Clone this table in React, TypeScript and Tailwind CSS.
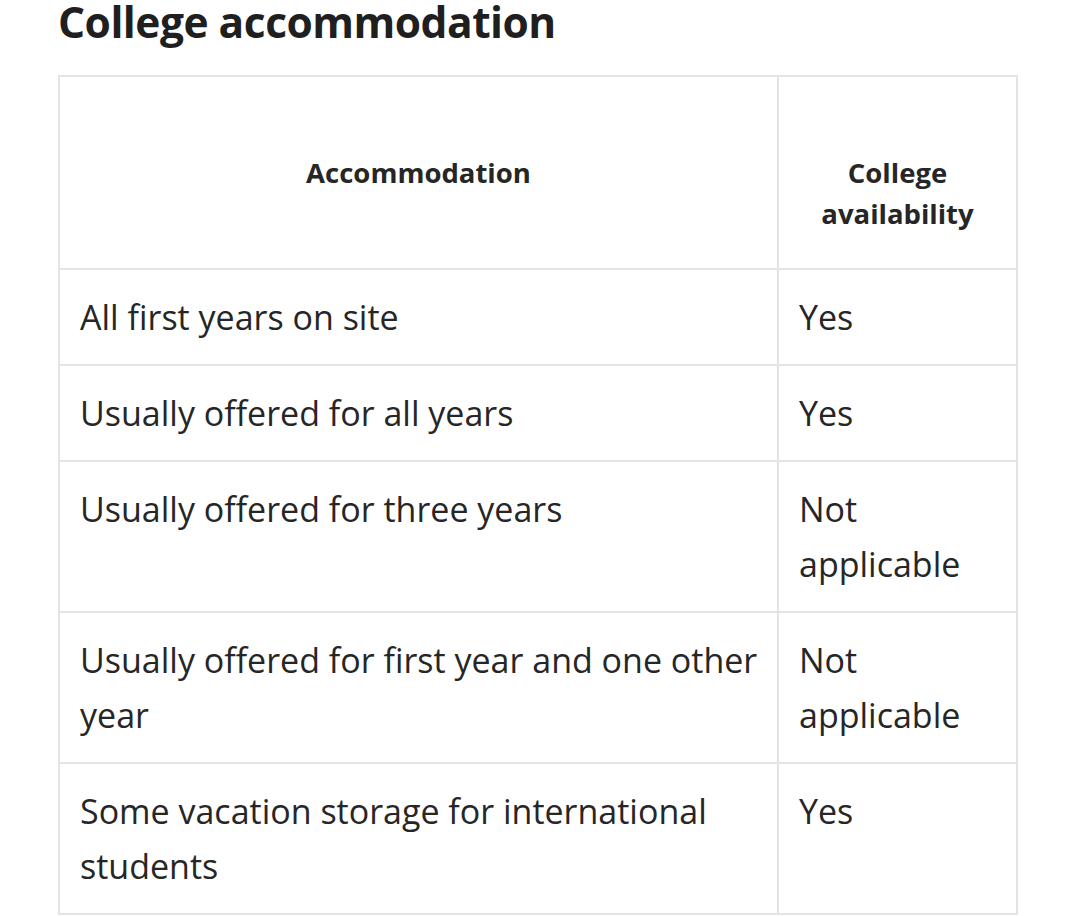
const rows: [string, string][] = [
  ["All first years on site", "Yes"],
  ["Usually offered for all years", "Yes"],
  ["Usually offered for three years", "Not applicable"],
  ["Usually offered for first year and one other year", "Not applicable"],
  ["Some vacation storage for international students", "Yes"],
];

export default function App() {
  return (
    <div className="min-h-[916px] w-[1080px] bg-white pl-[58px] text-[#262626] [font-family:'Open_Sans',sans-serif]">
      <h2 className="h-[75px] text-[42.5px] leading-[44px] font-bold tracking-[-0.5px] text-[#1f1f1f]">
        College accommodation
      </h2>
      <table className="w-[958px] table-fixed border-collapse">
        <colgroup>
          <col className="w-[719px]" />
          <col className="w-[239px]" />
        </colgroup>
        <thead>
          <tr className="h-[193px]">
            <th className="border-2 border-[#e4e4e1] px-4 pt-[75px] align-top text-[27.5px] leading-[41px] font-bold">
              Accommodation
            </th>
            <th className="border-2 border-[#e4e4e1] px-4 pt-[75px] align-top text-[27.5px] leading-[41px] font-bold">
              College availability
            </th>
          </tr>
        </thead>
        <tbody>
          {rows.map(([a, b]) => (
            <tr key={a}>
              <td className="border-2 border-[#e4e4e1] pl-5 pr-3 pt-5 pb-[19px] align-top text-[34px] leading-[55px]">
                {a}
              </td>
              <td className="border-2 border-[#e4e4e1] px-5 pt-5 pb-[19px] align-top text-[34px] leading-[55px]">
                {b}
              </td>
            </tr>
          ))}
        </tbody>
      </table>
    </div>
  );
}
